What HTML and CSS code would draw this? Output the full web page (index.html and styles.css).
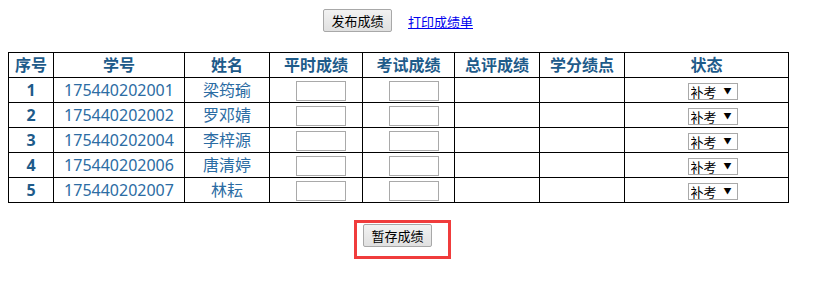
FILE: index.html
```html
<!DOCTYPE html>
<html lang="zh-CN">
<head>
    <meta charset="UTF-8">
    <meta name="viewport" content="width=device-width, initial-scale=1.0">
    <title>成绩录入</title>
    <link rel="stylesheet" href="styles.css">
</head>
<body>
    <div class="page">
        <div class="toolbar">
            <button class="btn" type="button">发布成绩</button>
            <a class="printLink" href="#">打印成绩单</a>
        </div>

        <table class="score-table">
            <colgroup>
                <col class="c-no">
                <col class="c-id">
                <col class="c-name">
                <col class="c-usual">
                <col class="c-exam">
                <col class="c-total">
                <col class="c-gpa">
                <col class="c-state">
            </colgroup>
            <thead>
                <tr>
                    <th>序号</th>
                    <th>学号</th>
                    <th>姓名</th>
                    <th>平时成绩</th>
                    <th>考试成绩</th>
                    <th>总评成绩</th>
                    <th>学分绩点</th>
                    <th>状态</th>
                </tr>
            </thead>
            <tbody id="rows"></tbody>
        </table>

        <div class="footer">
            <div class="mark">
                <button class="btn" type="button">暂存成绩</button>
            </div>
        </div>
    </div>

    <script>
        const students = [
            ['175440202001', '梁筠瑜'],
            ['175440202002', '罗邓婧'],
            ['175440202004', '李梓源'],
            ['175440202006', '唐清婷'],
            ['175440202007', '林耘']
        ];

        const tbody = document.getElementById('rows');
        students.forEach((s, i) => {
            const row = document.createElement('tr');
            row.innerHTML =
                '<td class="no">' + (i + 1) + '</td>' +
                '<td>' + s[0] + '</td>' +
                '<td>' + s[1] + '</td>' +
                '<td><input class="score" type="text"></td>' +
                '<td><input class="score" type="text"></td>' +
                '<td></td>' +
                '<td></td>' +
                '<td><span class="sel"><select><option>补考</option><option>正常</option></select></span></td>';
            tbody.appendChild(row);
        });
    </script>
</body>
</html>
```

FILE: styles.css
```css
body {
    margin: 8px;
    font-family: "Noto Sans", "Noto Sans CJK SC", sans-serif;
    background: #fff;
}
.page {
    width: 780px;
}
.toolbar {
    padding-top: 1px;
    display: flex;
    justify-content: center;
    align-items: center;
    gap: 16px;
    height: 23px;
}
.btn {
    width: 69px;
    height: 23px;
    padding: 0;
    font-family: "Noto Sans CJK SC", sans-serif;
    font-size: 13px;
    line-height: 21px;
    color: #000;
    background: linear-gradient(#f2f2f2, #e0e0e0);
    border: 1px solid #a8a8a8;
    border-radius: 2px;
}
.printLink {
    font-family: "Noto Sans CJK SC", sans-serif;
    font-size: 13px;
    color: #0000ee;
    text-decoration: underline;
    margin-top: 1px;
}
.score-table {
    margin-top: 20px;
    width: 780px;
    border-collapse: collapse;
    table-layout: fixed;
    font-size: 16px;
    line-height: 22px;
}
.c-no { width: 45px; }
.c-id { width: 131px; }
.c-name { width: 85px; }
.c-usual { width: 93px; }
.c-exam { width: 92px; }
.c-total { width: 85px; }
.c-gpa { width: 85px; }
.c-state { width: 164px; }
.score-table th, .score-table td {
    border: 1px solid #000;
    padding: 0;
    height: 24px;
    text-align: center;
    vertical-align: middle;
}
.score-table th {
    color: #1e5b8a;
    font-weight: bold;
}
.score-table td {
    color: #2b6ca3;
}
.score-table td.no {
    font-weight: bold;
    color: #1e5b8a;
}
.score {
    box-sizing: border-box;
    width: 50px;
    height: 20px;
    margin: 0 0 0 10px;
    border: 1px solid #a9a9a9;
    vertical-align: middle;
}
.sel {
    position: relative;
    display: inline-block;
    margin-left: 12px;
    vertical-align: middle;
}
.sel select {
    appearance: none;
    box-sizing: border-box;
    width: 50px;
    height: 17px;
    padding: 0 0 0 2px;
    font-family: "Noto Sans CJK SC", sans-serif;
    font-size: 13px;
    line-height: 15px;
    color: #000;
    background: #fff;
    border: 1px solid #a9a9a9;
    border-radius: 0;
    display: block;
}
.sel::after {
    content: "▼";
    position: absolute;
    right: 6px;
    top: 2px;
    font-size: 8px;
    line-height: 12px;
    color: #000;
    pointer-events: none;
}
.footer {
    margin-top: 17px;
    display: flex;
    justify-content: center;
}
.mark {
    margin-left: 9px;
    padding: 1px 16px 9px 6px;
    border: 3px solid #f03c3c;
}
.mark .btn {
    display: block;
}
```
